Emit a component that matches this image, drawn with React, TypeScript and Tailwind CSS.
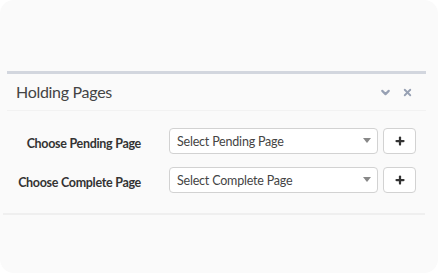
import { ChevronDown, X, Plus } from 'lucide-react';

const ROWS = [
  { label: 'Choose Pending Page', placeholder: 'Select Pending Page' },
  { label: 'Choose Complete Page', placeholder: 'Select Complete Page' },
];

function SelectRow({ label, placeholder }: { label: string; placeholder: string }) {
  return (
    <div className="flex items-center h-[25px]">
      <div className="w-[134px] mt-[7px] text-right text-[12.5px] tracking-[-0.3px] font-bold text-[#333] leading-none">
        {label}
      </div>
      <div className="ml-[28px] w-[209px] h-[26px] flex items-center justify-between rounded-[4px] border border-[#d2d2d2] bg-white pl-[7px] pr-[6px]">
        <span className="mt-[3px] text-[12.5px] tracking-[-0.2px] text-[#444] leading-none">{placeholder}</span>
        <span className="w-0 h-0 border-l-[4px] border-r-[4px] border-t-[5px] border-l-transparent border-r-transparent border-t-[#888]" />
      </div>
      <button
        type="button"
        className="ml-[5px] w-[33px] h-[26px] flex items-center justify-center rounded-[4px] border border-[#d2d2d2] bg-white text-[#333]"
      >
        <Plus className="size-[12px]" strokeWidth={4.5} />
      </button>
    </div>
  );
}

export default function App() {
  return (
    <div className="w-[438px] h-[273px] bg-white" style={{ fontFamily: 'Lato, "Noto Sans", sans-serif' }}>
      <div className="h-full rounded-[14px] bg-[#fafafa] pt-[71px]">
        <div className="ml-[7px] w-[419px] border-t-[3px] border-[#d2d6de]">
          <div className="h-[37px] flex items-center justify-between pl-[9px] pr-[13px] border-b border-[#f2f2f2]">
            <span className="text-[16px] tracking-[-0.3px] text-[#444]">Holding Pages</span>
            <div className="flex items-center gap-[10px] text-[#97a0b3]">
              <ChevronDown className="size-[13px]" strokeWidth={4} />
              <X className="size-[11px]" strokeWidth={4} />
            </div>
          </div>
        </div>
        <div className="ml-[7px] pt-[17px] pb-[21px] flex flex-col gap-[14px]">
          {ROWS.map((r) => (
            <SelectRow key={r.label} {...r} />
          ))}
        </div>
        <div className="ml-[3px] w-[422px] h-[2px] bg-[#efefef]" />
      </div>
    </div>
  );
}
